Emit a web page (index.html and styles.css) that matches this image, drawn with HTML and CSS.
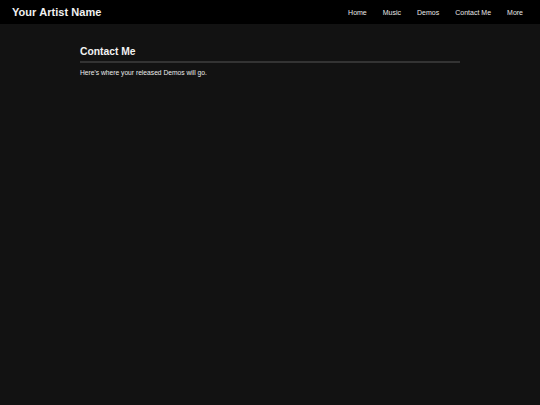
FILE: index.html
```html
<!DOCTYPE html>
<html>
<head>
<meta charset="utf-8">
<link rel="stylesheet" href="styles.css">
</head>
<body>
<header class="topbar">
  <div class="brand">Your Artist Name</div>
  <nav class="nav">
    <a href="#">Home</a>
    <a href="#">Music</a>
    <a href="#">Demos</a>
    <a href="#">Contact Me</a>
    <a href="#">More</a>
  </nav>
</header>
<main class="content">
  <h1 class="title">Contact Me</h1>
  <p class="text">Here's where your released Demos will go.</p>
</main>
</body>
</html>
```
FILE: styles.css
```css
html, body {
  margin: 0;
  padding: 0;
  background: #121212;
  font-family: "Liberation Sans", Arial, sans-serif;
  color: #fff;
  height: 100%;
}
.topbar {
  background: #000;
  height: 24px;
  display: flex;
  align-items: center;
  justify-content: space-between;
  padding: 0 17px 0 12px;
}
.brand {
  font-weight: bold;
  font-size: 11px;
  letter-spacing: 0.05px;
  color: #f0f0f0;
}
.nav {
  display: flex;
  gap: 16px;
}
.nav a {
  color: #e8e8e8;
  text-decoration: none;
  font-size: 7px;
}
.content {
  width: 380px;
  margin: 0 auto;
  padding-top: 21px;
}
.title {
  font-size: 10.3px;
  font-weight: bold;
  margin: 0;
  padding-bottom: 3px;
  border-bottom: 2px solid #333;
  color: #f2f2f2;
  line-height: 13px;
}
.text {
  font-size: 6.7px;
  margin: 6px 0 0 0;
  color: #ececec;
}
```
